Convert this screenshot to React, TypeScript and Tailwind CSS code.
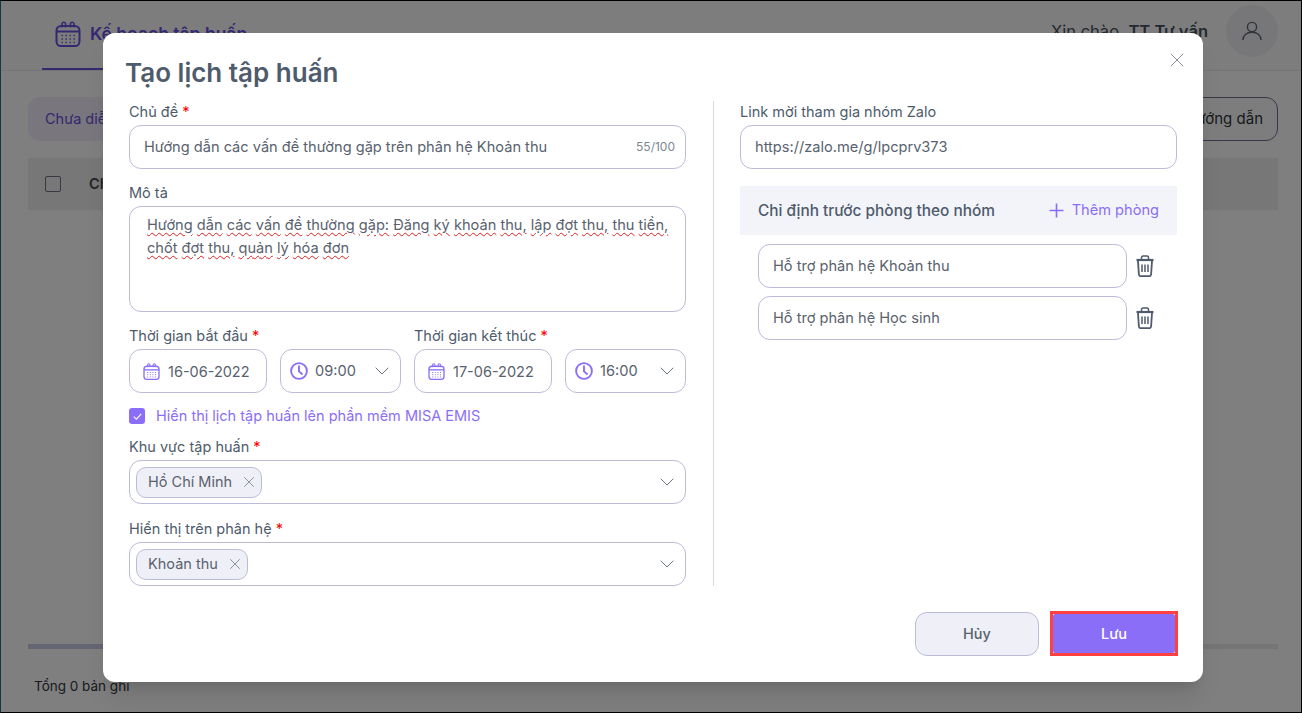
import { ChevronDown, X } from "lucide-react";

const inter = "font-['Inter','Liberation_Sans',sans-serif]";
const border = "border border-[#bcbcd8]";

const CalendarIcon = ({ className }: { className: string }) => (
  <svg viewBox="0 0 26 26" fill="none" stroke="currentColor" strokeWidth="2" className={className}>
    <rect x="1.5" y="5" width="23" height="20" rx="4.5" />
    <path d="M1.5 10.5h23" />
    <path d="M7 6.5V3a1.8 1.8 0 0 1 3.6 0v3.5M15.4 6.5V3A1.8 1.8 0 0 1 19 3v3.5" strokeWidth="1.6" />
    <path
      d="M6.5 14.5h1.4M10.5 14.5h1.4M14.5 14.5h1.4M18.5 14.5h1.4M6.5 18h1.4M10.5 18h1.4M14.5 18h1.4M18.5 18h1.4M6.5 21.5h1.4M10.5 21.5h1.4M14.5 21.5h1.4M18.5 21.5h1.4"
      strokeWidth="1.7"
    />
  </svg>
);

const ClockIcon = () => (
  <svg viewBox="0 0 18 18" fill="none" stroke="currentColor" strokeWidth="1.9" className="w-[18px] h-[18px] text-[#8b6ef8] shrink-0">
    <circle cx="9" cy="9" r="7.9" />
    <path d="M9 4.2V9.4l3 2.6" strokeLinecap="round" strokeLinejoin="round" />
  </svg>
);

const TrashIcon = () => (
  <svg viewBox="0 0 18 22" fill="none" stroke="#4e5b6c" strokeWidth="1.8" className="w-[18px] h-[22px]">
    <path d="M0.5 5h17" strokeWidth="2.2" />
    <path d="M5.5 4.5V2.6c0-.9.6-1.6 1.5-1.6h4c.9 0 1.5.7 1.5 1.6v1.9" strokeWidth="1.5" />
    <path d="M2 6l.9 13.5c.1 1 .8 1.7 1.8 1.7h8.6c1 0 1.7-.7 1.8-1.7L16 6" />
    <path d="M6 9.5v7.5M9 9.5v7.5M12 9.5v7.5" strokeWidth="1.5" />
  </svg>
);

const Label = ({ text, required }: { text: string; required?: boolean }) => (
  <div className="h-[14px] flex items-center text-[14.5px] text-[#4e5b6c] mb-[6px] whitespace-nowrap">
    {text}
    {required && <span className="text-[#ff0000] ml-1">*</span>}
  </div>
);

const Input = ({ value, counter }: { value: string; counter?: string }) => (
  <div className={`h-11 ${border} rounded-xl flex items-center justify-between pl-[14px] pr-[10px] text-[14.6px] text-[#59626e] bg-white`}>
    <span className="pt-px">{value}</span>
    {counter && <span className="text-[12px] text-[#7d8793]">{counter}</span>}
  </div>
);

const DateInput = ({ value }: { value: string }) => (
  <div className={`w-[138px] h-11 ${border} rounded-xl flex items-center pl-[13px] gap-2 text-[14.5px] text-[#59626e]`}>
    <CalendarIcon className="w-[17px] h-[17px] text-[#8b6ef8] shrink-0" />
    <span className="pt-px">{value}</span>
  </div>
);

const TimeInput = ({ value }: { value: string }) => (
  <div className={`w-[121px] h-11 ${border} rounded-xl flex items-center pl-[9px] pr-[6px] gap-[7px] text-[14.6px] text-[#59626e]`}>
    <ClockIcon />
    <span className="flex-1 pt-px">{value}</span>
    <ChevronDown className="w-6 h-6 text-[#6b7480]" strokeWidth={1} />
  </div>
);

const TagSelect = ({ tag }: { tag: string }) => (
  <div className={`h-11 ${border} rounded-xl flex items-center justify-between pl-[6px] pr-[6px]`}>
    <div className={`h-[31px] ${border} rounded-[10px] bg-[#eff0f7] flex items-center pl-[11px] pr-[3px] gap-2 text-[14.5px] text-[#59626e]`}>
      {tag}
      <X className="w-[18px] h-[18px] text-[#6b7480]" strokeWidth={1} />
    </div>
    <ChevronDown className="w-6 h-6 text-[#6b7480]" strokeWidth={1} />
  </div>
);

// dòng chữ bị gạch đỏ kiểm tra chính tả của trình duyệt
const Misspelled = ({ text }: { text: string }) => (
  <>
    {text.split(" ").map((word, i) => (
      <span key={i}>
        <span className="underline decoration-wavy decoration-[#e02020] decoration-1 underline-offset-2">{word}</span>{" "}
      </span>
    ))}
  </>
);

const Background = () => (
  <div className="h-full flex flex-col bg-[#fff] text-[#33343a] text-[14.5px]">
    <div className="h-[70px] shrink-0 border-b border-[#e8e8ee] flex justify-between pl-[41px] pr-[23px] bg-[#fbfbfb]">
      <div className="w-[240px] border-b-2 border-[#6a50e0] flex items-center gap-[9px] pl-[13px] pb-[1px] text-[#6a50e0] font-semibold text-[17.5px]">
        <CalendarIcon className="w-[26px] h-[26px]" />
        Kế hoạch tập huấn
      </div>
      <div className="flex items-center gap-[18px] mb-[9px] text-[#46525f] text-[16.5px]">
        <span>
          Xin chào, <b className="font-semibold">TT Tư vấn</b>
        </span>
        <div className="w-[52px] h-[52px] rounded-full bg-[#eeeef2] flex items-center justify-center">
          <svg viewBox="0 0 20 20" fill="none" stroke="#5b6672" strokeWidth="1.4" className="w-[20px] h-[20px]">
            <circle cx="10" cy="6" r="4.6" />
            <path d="M1 19c0-5 4-7.8 9-7.8s9 2.8 9 7.8" />
          </svg>
        </div>
      </div>
    </div>
    <div className="flex-1 pl-[27px] pr-[23px] pt-[26px] flex flex-col">
      <div className="flex justify-between">
        <div className="h-11 w-[130px] rounded-xl bg-[#f2edfc] text-[#6a50e0] flex items-center pl-[17px]">Chưa diễn ra</div>
        <div className="h-11 w-[130px] rounded-xl border border-[#6f6f90] bg-[#fafafa] flex items-center justify-end pr-[14px] text-[15px]">Hướng dẫn</div>
      </div>
      <div className="h-[52px] mt-[17px] bg-[#eeeff1] flex items-center pl-[17px] gap-7 font-semibold text-[#4a4a4a]">
        <div className="w-4 h-4 border border-[#6d7480] rounded-[2px]" />
        Chủ đề
      </div>
      <div className="flex-1" />
      <div className="h-[5px] bg-[#ebebeb] mb-[63px]">
        <div className="h-full w-[500px] bg-[#cbcbe8]" />
      </div>
    </div>
    <div className="absolute left-[33px] bottom-[19px] leading-none text-[13.5px]">Tổng 0 bản ghi</div>
  </div>
);

export default function App() {
  return (
    <div className={`relative w-[1302px] h-[713px] overflow-hidden border border-black border-l-[#12384a] ${inter}`}>
      <Background />
      <div className="absolute inset-0 bg-black/50 pl-[102px] pt-[32px]">
        <div className="w-[1100px] h-[649px] bg-white rounded-xl shadow-xl flex flex-col relative">
          <X className="absolute right-[14px] top-[15px] w-6 h-6 text-[#8a8f98]" strokeWidth={1} />
          <h1 className="pl-[22px] pt-[22px] text-[26px] leading-[36px] font-semibold text-[#4e5b6c]">Tạo lịch tập huấn</h1>
          <div className="flex pl-[26px] pr-[26px] pt-[14px]">
            <div className="w-[557px] shrink-0">
              <Label text="Chủ đề" required />
              <Input value="Hướng dẫn các vấn đề thường gặp trên phân hệ Khoản thu" counter="55/100" />
              <div className="mt-[17px]">
                <Label text="Mô tả" />
                <div className={`h-[106px] ${border} rounded-xl pl-[17px] pr-3 pt-[7px] text-[14.6px] leading-[23px] text-[#59626e]`}>
                  <Misspelled text="Hướng dẫn các vấn đề thường gặp:" /> <Misspelled text="Đăng ký khoản thu, lập đợt thu, thu tiền," />
                  <Misspelled text="chốt đợt thu, quản lý hóa đơn" />
                </div>
              </div>
              <div className="mt-[17px] flex gap-[13px]">
                <div className="flex-1">
                  <Label text="Thời gian bắt đầu" required />
                  <div className="flex justify-between">
                    <DateInput value="16-06-2022" />
                    <TimeInput value="09:00" />
                  </div>
                </div>
                <div className="flex-1">
                  <Label text="Thời gian kết thúc" required />
                  <div className="flex justify-between">
                    <DateInput value="17-06-2022" />
                    <TimeInput value="16:00" />
                  </div>
                </div>
              </div>
              <div className="mt-[15px] h-4 flex items-center gap-[11px] text-[14.5px] text-[#8b6ef8]">
                <div className="w-4 h-4 rounded-[3px] bg-[#8b6ef8] flex items-center justify-center">
                  <svg viewBox="0 0 10 8" fill="none" stroke="#fff" strokeWidth="1.2" className="w-[9px] h-[7px]">
                    <path d="M0.7 4l3 3L9.3 1" />
                  </svg>
                </div>
                Hiển thị lịch tập huấn lên phần mềm MISA EMIS
              </div>
              <div className="mt-[16px]">
                <Label text="Khu vực tập huấn" required />
                <TagSelect tag="Hồ Chí Minh" />
              </div>
              <div className="mt-[18px]">
                <Label text="Hiển thị trên phân hệ" required />
                <TagSelect tag="Khoản thu" />
              </div>
            </div>
            <div className="w-px -mt-1 bg-[#d9dae4] ml-[27px] mr-[26px] shrink-0" />
            <div className="flex-1">
              <Label text="Link mời tham gia nhóm Zalo" />
              <Input value="https://zalo.me/g/lpcprv373" />
              <div className="mt-[17px] h-[49px] bg-[#f3f4f9] flex items-center justify-between pl-[18px] pr-[18px] text-[14.6px]">
                <span className="font-medium text-[#4e5b6c] text-[15.4px]">Chỉ định trước phòng theo nhóm</span>
                <span className="flex items-center gap-2 text-[#8b6ef8]">
                  <svg viewBox="0 0 15 15" fill="none" stroke="currentColor" strokeWidth="1.6" className="w-[15px] h-[15px]">
                    <path d="M7.5 0.5v14M0.5 7.5h14" />
                  </svg>
                  Thêm phòng
                </span>
              </div>
              <div className="mt-[9px] pl-[18px] flex flex-col gap-2">
                {["Hỗ trợ phân hệ Khoản thu", "Hỗ trợ phân hệ Học sinh"].map((room) => (
                  <div key={room} className="flex items-center gap-[9px]">
                    <div className="w-[369px]">
                      <Input value={room} />
                    </div>
                    <TrashIcon />
                  </div>
                ))}
              </div>
            </div>
          </div>
          <div className="mt-[26px] pr-[25px] flex justify-end gap-[11px]">
            <button className={`w-[124px] h-11 ${border} rounded-xl bg-[#eff0f7] text-[14.5px] font-medium text-[#59626e]`}>Hủy</button>
            <div className="w-[128px] h-[45px] -mt-px border-[3px] border-[#ff4040]">
              <button className="w-full h-full rounded-[2px] bg-[#8b6ef8] text-[14.5px] font-medium text-white">Lưu</button>
            </div>
          </div>
        </div>
      </div>
    </div>
  );
}
